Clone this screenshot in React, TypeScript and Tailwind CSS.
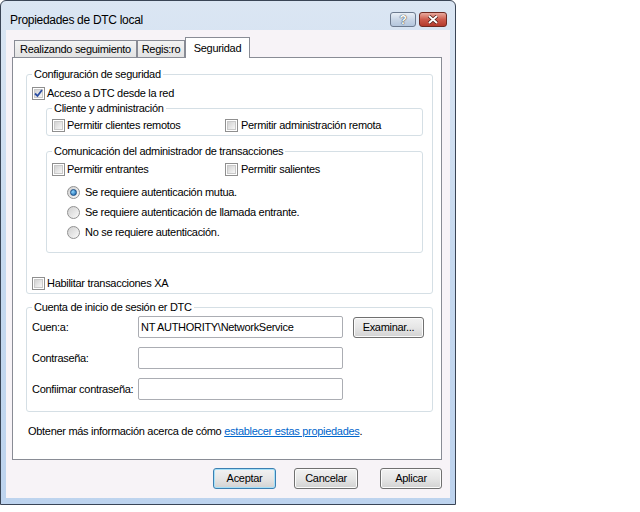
import React from 'react';

function CheckBox({ checked }: { checked?: boolean }) {
  return (
    <span className="relative flex h-[13px] w-[13px] shrink-0 items-center justify-center border border-[#8f8f8f] bg-white">
      <span className="h-[9px] w-[9px] border border-[#c9c9c9] bg-linear-to-br from-[#d2d2d2] to-[#f7f7f7]" />
      {checked && (
        <svg className="absolute left-0 top-0" width="11" height="11" viewBox="0 0 11 11">
          <path d="M2 5.5 L4.5 8 L9 2" fill="none" stroke="#2b4ea3" strokeWidth="1.8" />
        </svg>
      )}
    </span>
  );
}

function Radio({ on }: { on?: boolean }) {
  return (
    <span className="flex h-[13px] w-[13px] shrink-0 items-center justify-center rounded-full border border-[#919191] bg-linear-to-br from-[#d0d0d0] to-[#fafafa]">
      {on && (
        <span className="h-[7px] w-[7px] rounded-full border border-[#1c4f86] bg-radial-[at_35%_35%] from-[#8fd6ff] to-[#0c5aa3]" />
      )}
    </span>
  );
}

function Group({ title, className, children }: { title: string; className?: string; children: React.ReactNode }) {
  return (
    <fieldset className={`rounded-[3px] border border-[#d5dfe5] ${className ?? ''}`}>
      <legend className="ml-[5px] px-[2px] leading-[14px]">{title}</legend>
      {children}
    </fieldset>
  );
}

function Button({ label, primary, className }: { label: string; primary?: boolean; className?: string }) {
  return (
    <button
      className={`flex h-[21px] items-center justify-center rounded-[3px] border ${
        primary ? 'border-[#3c7fb1] shadow-[inset_0_0_0_1px_#a6e0f8]' : 'border-[#707070] shadow-[inset_0_0_0_1px_#fbfbfb]'
      } bg-linear-to-b from-[#f2f2f2] via-[#e6e6e6] to-[#d2d2d2] text-black ${className ?? ''}`}
    >
      {label}
    </button>
  );
}

const tabs = ['Realizando seguimiento', 'Regis:ro'];

export default function App() {
  return (
    <div className="min-h-screen bg-white font-['Liberation_Sans',sans-serif] text-[11px] tracking-[-0.3px] text-black">
      <div className="flex h-[505px] w-[456px] flex-col rounded-t-[6px] border border-[#3a4556] bg-linear-to-b from-[#dbe6f3] via-[#c6d9ef] to-[#bdd3ee]">
        {/* title bar */}
        <div className="flex h-[29px] shrink-0 items-start pl-[9px] pr-[8px] pt-[11px]">
          <span className="flex-1 text-[12px] leading-[16px]">Propiedades de DTC local</span>
          <button className="flex h-[15px] w-[26px] items-center justify-center rounded-[3px] border border-[#6c7a8e] bg-linear-to-b from-[#e9eff6] via-[#c9d6e6] to-[#b4c6dc] text-[12px] font-bold leading-none text-white [text-shadow:0_0_1px_#333,0_0_1px_#333]">
            ?
          </button>
          <button className="ml-[3px] flex h-[15px] w-[28px] items-center justify-center rounded-[3px] border border-[#6e2a22] bg-linear-to-b from-[#e8a99e] via-[#cc5a4c] to-[#b43a2c]">
            <svg width="12" height="9" viewBox="0 0 12 9">
              <path d="M2 1 L10 8 M10 1 L2 8" stroke="#4a1a14" strokeWidth="3.4" />
              <path d="M2 1 L10 8 M10 1 L2 8" stroke="#fff" strokeWidth="2" />
            </svg>
          </button>
        </div>

        {/* client area */}
        <div className="mx-[5px] mb-[6px] flex flex-1 flex-col bg-[#f7f3f7]">
          <div className="ml-[6px] mr-[8px] mt-[7px] flex flex-col">
            {/* tabs */}
            <div className="flex h-[20px] items-end pl-[2px]">
              {tabs.map((t, i) => (
                <div
                  key={t}
                  className={`flex h-[17px] items-center justify-center border border-b-0 border-[#898c95] bg-linear-to-b from-[#f3f3f3] to-[#e3e3e3] ${
                    i === 0 ? 'w-[123px]' : 'w-[48px]'
                  }`}
                >
                  {t}
                </div>
              ))}
              <div className="relative z-10 -mb-px flex h-[21px] w-[65px] items-start justify-center border border-b-0 border-[#898c95] bg-white pt-[2px]">
                Seguridad
              </div>
            </div>

            {/* tab panel */}
            <div className="flex h-[403px] flex-col border border-[#898c95] bg-white">
              <Group title="Configuración de seguridad" className="ml-[13px] mr-[8px] mt-[9px]">
                <label className="ml-[5px] mt-[5px] flex h-[14px] items-center gap-[2px]">
                  <CheckBox checked />
                  <span>Acceso a DTC desde la red</span>
                </label>

                <Group title="Cliente y administración" className="ml-[19px] mr-[9px] mt-[1px] pb-[3px]">
                  <div className="ml-[5px] mt-[3px] flex h-[14px] items-center">
                    <label className="flex w-[173px] items-center gap-[2px]">
                      <CheckBox />
                      <span>Permitir clientes remotos</span>
                    </label>
                    <label className="flex items-center gap-[3px]">
                      <CheckBox />
                      <span>Permitir administración remota</span>
                    </label>
                  </div>
                </Group>

                <Group title="Comunicación del administrador de transacciones" className="ml-[19px] mr-[9px] mt-[8px] pb-[10px]">
                  <div className="ml-[5px] mt-[4px] flex h-[14px] items-center">
                    <label className="flex w-[173px] items-center gap-[2px]">
                      <CheckBox />
                      <span>Permitir entrantes</span>
                    </label>
                    <label className="flex items-center gap-[3px]">
                      <CheckBox />
                      <span>Permitir salientes</span>
                    </label>
                  </div>
                  <div className="ml-[20px] mt-[6px] flex flex-col">
                    {[
                      ['Se requiere autenticación mutua.', true],
                      ['Se requiere autenticación de llamada entrante.', false],
                      ['No se requiere autenticación.', false],
                    ].map(([text, on]) => (
                      <label key={text as string} className="flex h-[20px] items-center gap-[5px]">
                        <Radio on={on as boolean} />
                        <span>{text as string}</span>
                      </label>
                    ))}
                  </div>
                </Group>

                <label className="ml-[5px] mt-[23px] mb-[3px] flex h-[14px] items-center gap-[2px]">
                  <CheckBox />
                  <span>Habilitar transacciones XA</span>
                </label>
              </Group>

              <Group title="Cuenta de inicio de sesión er DTC" className="ml-[13px] mr-[8px] mt-[6px] pb-[11px]">
                <div className="ml-[5px] mt-[2px] flex h-[22px] items-center">
                  <span className="w-[106px]">Cuen:a:</span>
                  <div className="flex h-[22px] w-[205px] items-center rounded-[2px] border border-[#abadb3] bg-white pl-[2px]">
                    NT AUTHORITY\NetworkService
                  </div>
                  <Button label="Examinar..." className="ml-[10px] w-[71px]" />
                </div>
                <div className="ml-[5px] mt-[9px] flex h-[22px] items-center">
                  <span className="w-[106px]">Contraseña:</span>
                  <div className="h-[22px] w-[205px] rounded-[2px] border border-[#abadb3] bg-white" />
                </div>
                <div className="ml-[5px] mt-[9px] flex h-[22px] items-center">
                  <span className="w-[106px]">Confiimar contraseña:</span>
                  <div className="h-[22px] w-[205px] rounded-[2px] border border-[#abadb3] bg-white" />
                </div>
              </Group>

              <p className="ml-[15px] mt-[13px] leading-[13px]">
                Obtener más información acerca de cómo{' '}
                <a className="text-[#0066cc] underline">establecer estas propiedades</a>.
              </p>
            </div>
          </div>

          {/* dialog buttons */}
          <div className="mr-[8px] mt-[8px] flex justify-end">
            <Button label="Aceptar" primary className="w-[63px]" />
            <Button label="Cancelar" className="ml-[18px] w-[64px]" />
            <Button label="Aplicar" className="ml-[22px] w-[62px]" />
          </div>
        </div>
      </div>
    </div>
  );
}
